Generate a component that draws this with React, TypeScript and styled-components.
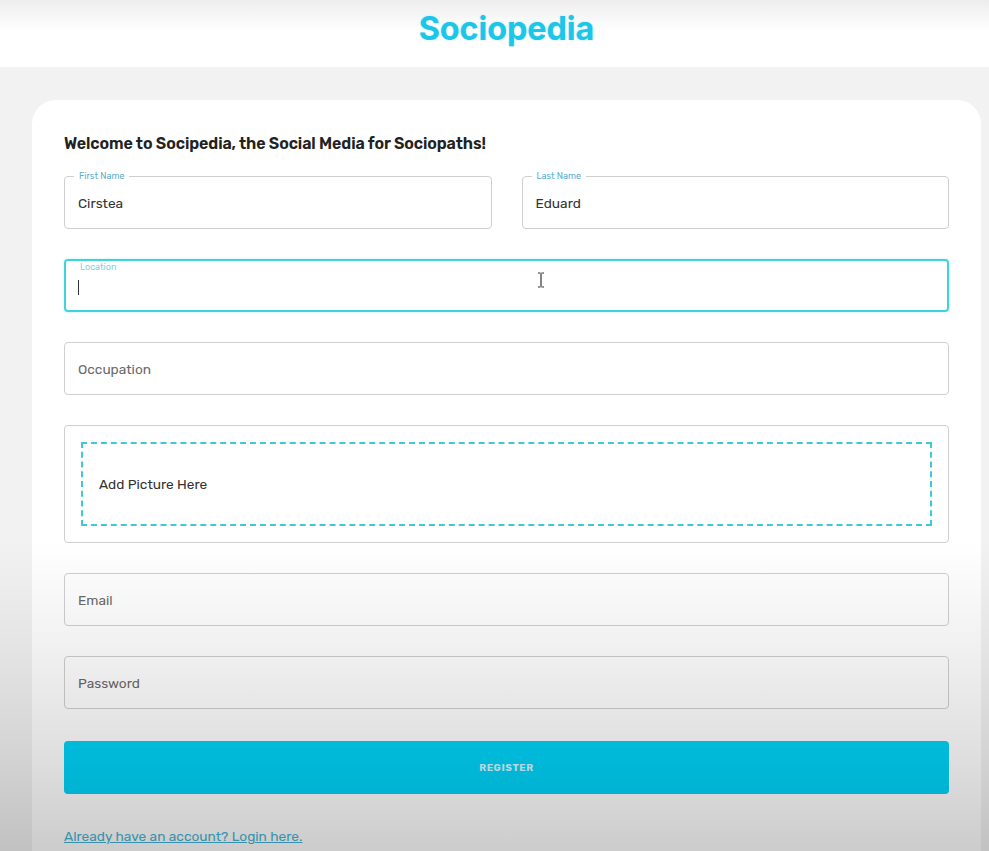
import React from "react";
import styled, { createGlobalStyle } from "styled-components";

const Global = createGlobalStyle`
  html, body { margin: 0; padding: 0; }
  body {
    background: #f2f2f2;
    font-family: Rubik, Inter, "Noto Sans", sans-serif;
    overflow: hidden;
  }
`;

const Page = styled.div`
  position: relative;
  width: 989px;
  height: 851px;
  overflow: hidden;
  background: #f2f2f2;
`;

const Header = styled.header`
  height: 67px;
  box-sizing: border-box;
  padding-top: 8px;
  display: flex;
  align-items: flex-start;
  justify-content: center;
  background: linear-gradient(#ededed, #ffffff 45%);
`;

const Logo = styled.h1`
  margin: 0;
  font-family: Inter, "Noto Sans", sans-serif;
  font-weight: 700;
  font-size: 32.4px;
  line-height: 40px;
  letter-spacing: -0.1px;
  color: #1cc6e8;
  text-shadow: 0 0 2px rgba(28, 198, 232, 0.35);
  transform: translate(12px, 1px);
`;

const Card = styled.main`
  width: 885px;
  margin: 33px 0 0 32px;
  padding: 34px 32px 40px;
  background: #ffffff;
  border-radius: 24px;
`;

const Welcome = styled.h2`
  margin: 0 0 23px;
  font-size: 16px;
  line-height: 19px;
  font-weight: 600;
  color: #222;
  letter-spacing: -0.1px;
`;

const Form = styled.div`
  display: grid;
  grid-template-columns: 1fr 1fr;
  column-gap: 30px;
  row-gap: 30px;
`;

const Field = styled.div<{ $span?: boolean; $focused?: boolean }>`
  position: relative;
  grid-column: ${(p) => (p.$span ? "1 / -1" : "auto")};
  height: 53px;
  box-sizing: border-box;
  border: ${(p) => (p.$focused ? "2px solid #3fd3e0" : "1px solid #cfcfcf")};
  border-radius: 4px;
  display: flex;
  align-items: center;
  padding: 0 ${(p) => (p.$focused ? "12px" : "13px")};
  box-shadow: ${(p) => (p.$focused ? "0 0 2px rgba(63,211,224,0.5)" : "none")};
`;

const FloatLabel = styled.span<{ $inside?: boolean }>`
  position: absolute;
  left: 9px;
  top: ${(p) => (p.$inside ? "0px" : "-7px")};
  padding: 0 5px;
  background: #fff;
  font-size: 9px;
  line-height: 12px;
  color: ${(p) => (p.$inside ? "#7fd3e3" : "#5aaed0")};
`;

const Value = styled.span`
  font-size: 13.7px;
  color: #333;
`;

const Placeholder = styled.span`
  font-size: 13.7px;
  color: #6a6a6a;
`;

const Caret = styled.span`
  display: inline-block;
  width: 1px;
  height: 15px;
  background: #333;
  margin-top: 4px;
`;

const Pointer = styled.svg`
  position: absolute;
  left: 471px;
  top: 11px;
`;

const PictureBox = styled.div`
  grid-column: 1 / -1;
  box-sizing: border-box;
  height: 118px;
  border: 1px solid #cfcfcf;
  border-radius: 4px;
  padding: 16px;
`;

const Dropzone = styled.div`
  height: 100%;
  box-sizing: border-box;
  border: 2px dashed #3fc8d8;
  display: flex;
  align-items: center;
  padding: 0 16px;
  font-size: 13.7px;
  color: #333;
`;

const Button = styled.button`
  grid-column: 1 / -1;
  height: 53px;
  border: none;
  border-radius: 4px;
  background: #00d3f8;
  color: #d6f6ff;
  font-family: inherit;
  font-size: 10px;
  font-weight: 700;
  letter-spacing: 0.6px;
  margin-top: 2px;
`;

const LoginLink = styled.a`
  display: inline-block;
  margin-top: 34px;
  font-size: 13.7px;
  color: #44b4d4;
  text-decoration: underline;
`;

const Shade = styled.div`
  position: absolute;
  inset: 0;
  pointer-events: none;
  background: linear-gradient(
    rgba(0, 0, 0, 0) 0px,
    rgba(0, 0, 0, 0) 540px,
    rgba(0, 0, 0, 0.06) 650px,
    rgba(0, 0, 0, 0.13) 760px,
    rgba(0, 0, 0, 0.2) 851px
  );
`;

export default function App() {
  return (
    <Page>
      <Global />
      <Header>
        <Logo>Sociopedia</Logo>
      </Header>
      <Card>
        <Welcome>Welcome to Socipedia, the Social Media for Sociopaths!</Welcome>
        <Form>
          <Field>
            <FloatLabel>First Name</FloatLabel>
            <Value>Cirstea</Value>
          </Field>
          <Field>
            <FloatLabel>Last Name</FloatLabel>
            <Value>Eduard</Value>
          </Field>
          <Field $span $focused>
            <FloatLabel $inside>Location</FloatLabel>
            <Caret />
            <Pointer width="8" height="16" viewBox="0 0 8 16">
              <path d="M1 1h2.5M4.5 1H7M4 1.5v13M1 15h2.5M4.5 15H7" stroke="#333" strokeWidth="1.2" fill="none" />
            </Pointer>
          </Field>
          <Field $span>
            <Placeholder>Occupation</Placeholder>
          </Field>
          <PictureBox>
            <Dropzone>Add Picture Here</Dropzone>
          </PictureBox>
          <Field $span>
            <Placeholder>Email</Placeholder>
          </Field>
          <Field $span>
            <Placeholder>Password</Placeholder>
          </Field>
          <Button>REGISTER</Button>
        </Form>
        <LoginLink>Already have an account? Login here.</LoginLink>
      </Card>
      <Shade />
    </Page>
  );
}
